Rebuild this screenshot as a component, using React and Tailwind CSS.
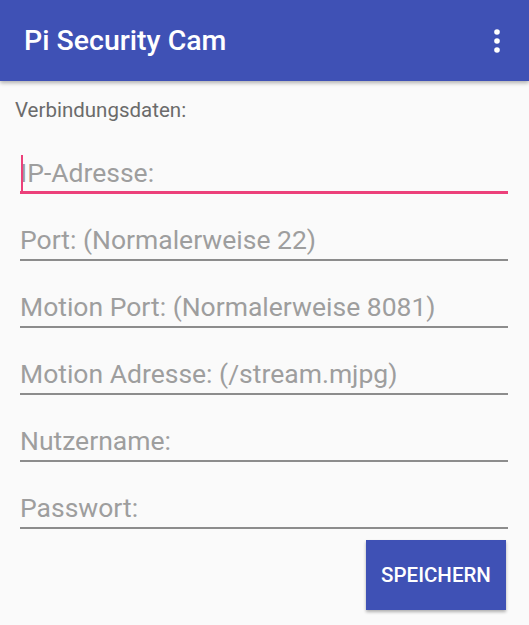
import { useState } from "react";

const fields = [
  "IP-Adresse:",
  "Port: (Normalerweise 22)",
  "Motion Port: (Normalerweise 8081)",
  "Motion Adresse: (/stream.mjpg)",
  "Nutzername:",
  "Passwort:",
];

function App() {
  const [focused] = useState(0);

  return (
    <div className="min-h-[625px] bg-[#fafafa] font-['Roboto',sans-serif]">
      {/* Toolbar */}
      <div className="relative z-10 flex h-[81px] items-center justify-between bg-[#3f51b5] pl-6 pr-[24px] shadow-[0_2px_4px_rgba(0,0,0,0.3)]">
        <h1 className="mt-[2px] text-[28.5px] font-medium text-white">Pi Security Cam</h1>
        <svg width="8" height="26" viewBox="0 0 8 26" className="mr-[4px]">
          <circle cx="4" cy="4" r="2.8" fill="white" />
          <circle cx="4" cy="13" r="2.8" fill="white" />
          <circle cx="4" cy="22" r="2.8" fill="white" />
        </svg>
      </div>

      <div className="px-[15px]">
        <p className="mt-[17px] text-[20.5px] leading-[24px] text-[#6b6b6b]">
          Verbindungsdaten:
        </p>

        <div className="mt-[5px] flex flex-col pl-[5px] pr-[6px]">
          {fields.map((label, index) => (
            <div
              key={label}
              className={
                index === focused
                  ? "relative mt-[31px] border-b-[3px] border-[#ec407a] pb-[3px]"
                  : "relative mt-[31px] border-b-2 border-[#8c8c8c] pb-[4px]"
              }
            >
              {index === focused && (
                <span className="absolute left-[1px] top-[-3px] h-[36px] w-[2px] bg-[#ec407a]"></span>
              )}
              <span className="block text-[26.5px] leading-[30px] text-[#9e9e9e]">
                {label}
              </span>
            </div>
          ))}
        </div>

        <div className="mt-[11px] flex justify-end pr-[8px]">
          <button className="h-[70px] w-[140px] bg-[#3f51b5] text-[20.5px] font-medium text-white shadow-[0_2px_3px_rgba(0,0,0,0.3)]">
            SPEICHERN
          </button>
        </div>
      </div>
    </div>
  );
}

export default App;
